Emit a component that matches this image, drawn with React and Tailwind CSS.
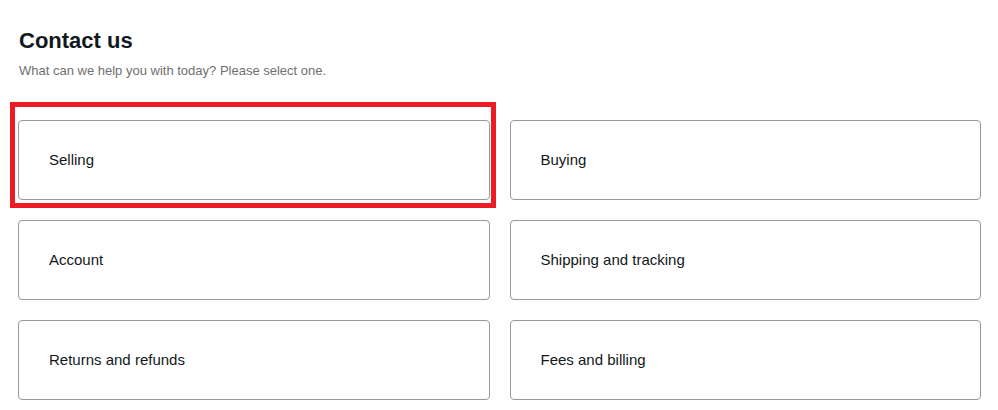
const topics = [
  "Selling",
  "Buying",
  "Account",
  "Shipping and tracking",
  "Returns and refunds",
  "Fees and billing",
];

export default function App() {
  return (
    <div className="min-h-screen bg-white pl-[18px] pr-[17px] pt-[27px] font-['Liberation_Sans',Arial,sans-serif] text-[#111820]">
      {/* Header */}
      <h1 className="pl-px text-[22px] font-bold leading-[28px]">Contact us</h1>
      <p className="mt-[8px] pl-px text-[13px] leading-[16px] text-[#707070]">
        What can we help you with today? Please select one.
      </p>

      {/* Topic cards */}
      <div className="mt-[41px] grid grid-cols-2 gap-x-[20px] gap-y-[20px]">
        {topics.map((t, i) => (
          <div key={t} className="relative">
            <button
              type="button"
              className="flex h-[80px] w-full items-center rounded-[4px] border border-[#999999] bg-white px-[30px] text-left text-[15px] text-[#111820]"
            >
              {t}
            </button>
            {i === 0 && (
              <div className="pointer-events-none absolute left-[-8px] top-[-18px] h-[106px] w-[486px] border-[5px] border-[#ed1c24]" />
            )}
          </div>
        ))}
      </div>
    </div>
  );
}
